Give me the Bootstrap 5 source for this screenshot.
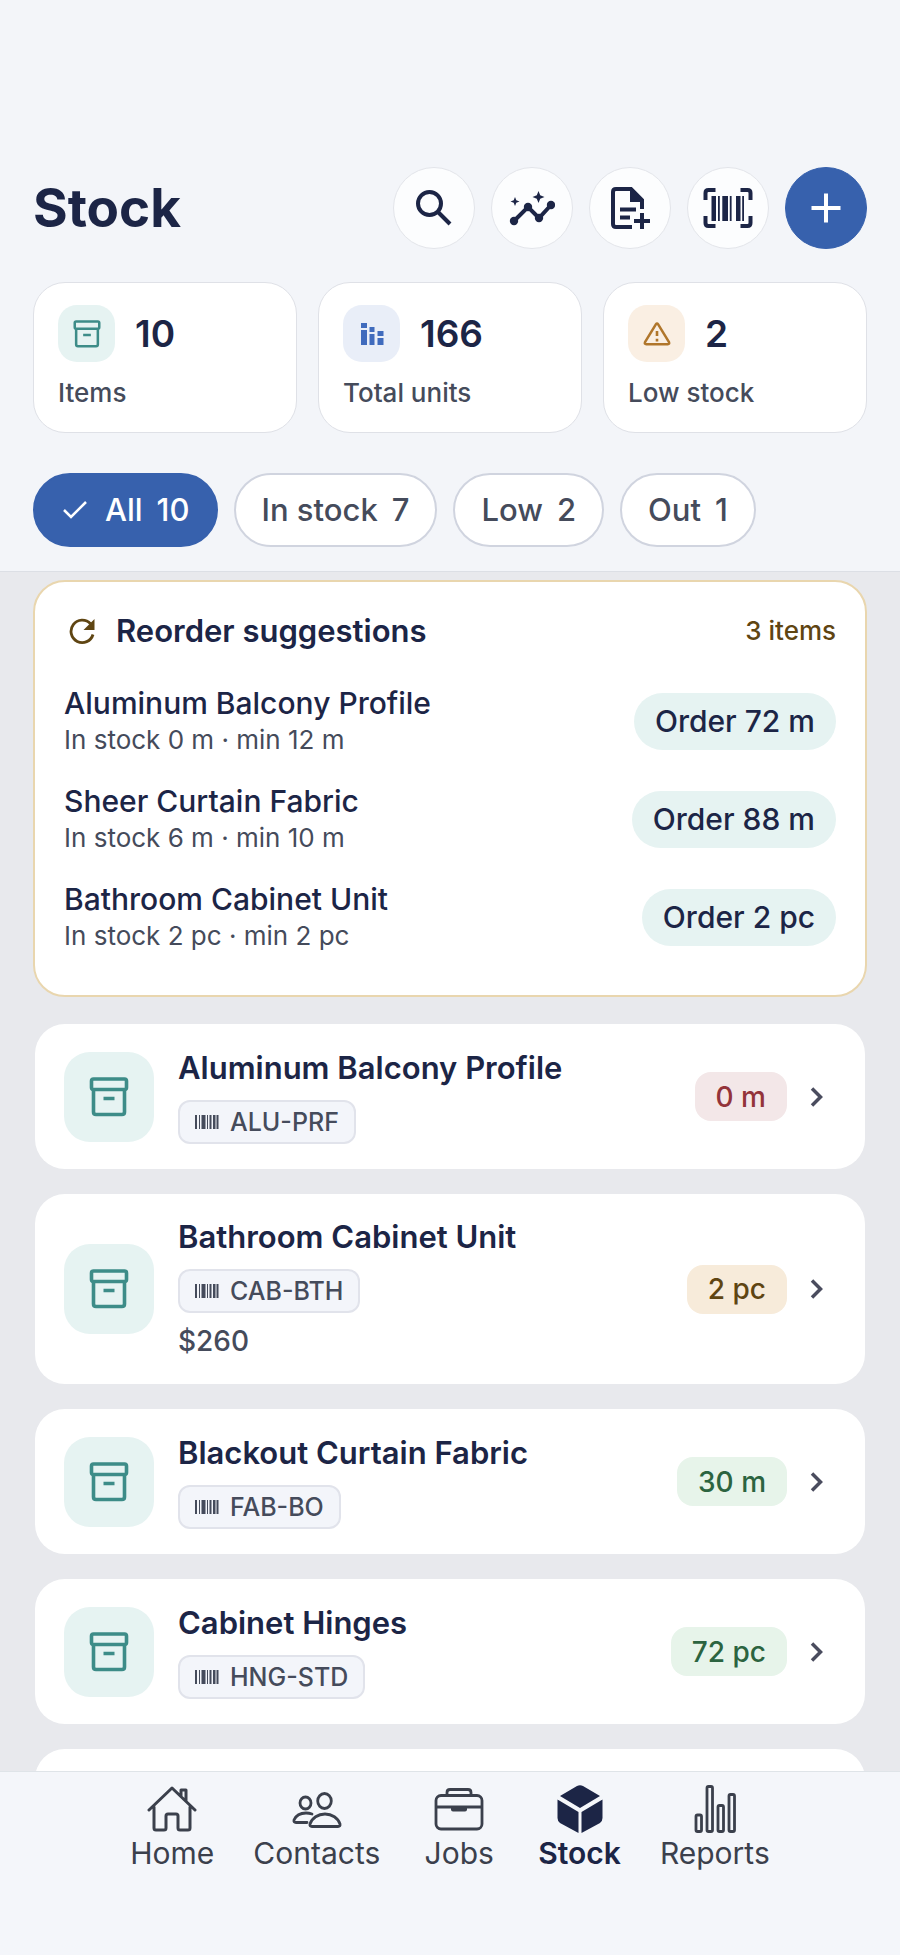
<!DOCTYPE html>
<html lang="en">
<head>
<meta charset="utf-8">
<meta name="viewport" content="width=device-width, initial-scale=1">
<title>Stock</title>
<link href="https://cdn.jsdelivr.net/npm/bootstrap@5.3.0/dist/css/bootstrap.min.css" rel="stylesheet">
<style>
:root{--ink:#1c2546;--muted:#454b5b;--brand:#3761ad;--teal:#3d8c88;--teal-bg:#e6f3f2;--panel:#f3f5f9}
body{font-family:Inter,"Liberation Sans",sans-serif;font-size:28px;line-height:36px;color:var(--ink);background:#e8e9ed}
svg{display:block;flex:none}
.app-head{background:var(--panel);border-bottom:1px solid #dcdfe5;padding:167px 33px 24px}
.page-title{font-size:53px;line-height:64px;font-weight:700}
.round-btn{width:82px;height:82px;border-radius:50%;border:1px solid #e3e5ea;background:#fcfdfe;color:var(--ink);padding:0}
.round-btn.primary{background:var(--brand);border-color:var(--brand);color:#fff}
.head-gap{gap:16px}
.stats{gap:21px;margin-top:33px}
.stat{flex:1 1 0;background:#fff;border:1px solid #dfe1e7;border-radius:32px;padding:22px 24px 23px}
.stat-top{gap:20px}
.tile{width:57px;height:57px;border-radius:19px;background:var(--teal-bg);color:var(--teal)}
.tile.blue{background:#e9eef8;color:#406bbd}
.tile.amber{background:#faefe3;color:#b0762b}
.stat-num{font-size:37px;line-height:44px;font-weight:600}
.stat-label{font-size:26px;line-height:32px;font-weight:500;color:var(--muted);margin-top:15px}
.chips{gap:16px;margin-top:40px}
.chip{height:74px;border-radius:37px;border:2px solid #d0d4df;background:#fff;color:var(--muted);font-size:31px;font-weight:500;padding:0 26px;gap:14px}
.chip.on{background:var(--brand);border-color:var(--brand);color:#fff;padding-left:28px}
.feed{min-height:0;overflow-y:auto;scrollbar-width:none;padding:8px 33px 0}
.feed::-webkit-scrollbar{display:none}
.reorder{background:#fff;border:2px solid #e9d6ae;border-radius:32px;padding:31px 29px 41px}
.reorder h2,.item-name{font-size:31px;line-height:36px;font-weight:600;color:var(--ink)}
.reorder-head{color:#5f4512;margin-bottom:35px;gap:20px}
.small-text{font-size:26px;line-height:36px}
.text-sub{color:var(--muted)}
.row-line{height:74px;margin-bottom:24px}
.row-line:last-child{margin-bottom:0}
.row-name{font-size:30px;line-height:38px;font-weight:500}
.order-btn{height:57px;border:0;border-radius:29px;background:var(--teal-bg);color:var(--ink);font-weight:500;font-size:30px;padding:0 21px}
.items{padding:27px 2px 0;gap:25px}
.item{background:#fff;border-radius:30px;padding:25px 41px 25px 29px;min-height:145px;color:inherit;text-decoration:none}
.item .tile{width:90px;height:90px;border-radius:26px;margin-right:24px}
.sku{height:44px;border:2px solid #e1e3eb;border-radius:12px;background:#f3f5fa;color:var(--muted);font-size:25px;font-weight:500;padding:0 15px;gap:11px;margin-top:14px}
.price{color:var(--muted);font-weight:500;line-height:36px;margin-top:10px}
.qty{height:49px;border-radius:16px;padding:0 21px;font-weight:500;font-size:28px;margin-right:23px}
.q-out{background:#f3e7e8;color:#93333a}
.q-low{background:#f7ebda;color:#5f4512}
.q-ok{background:#e7f4ea;color:#2c6440}
.chev{color:#4a4c5e}
.tabs{background:#f4f6fa;border-top:1px solid #dfe4e8;height:184px;padding-top:13px;gap:39px}
.tab-link{color:#3b404c;text-decoration:none;min-width:80px;font-size:30px}
.tab-link.on{color:var(--ink);font-weight:600}
.tab-link svg{margin-bottom:2px}
</style>
</head>
<body class="d-flex flex-column vh-100 overflow-hidden">
<svg width="0" height="0" class="position-absolute" aria-hidden="true">
<symbol id="box" viewBox="0 0 40 40"><g fill="none" stroke="currentColor" stroke-width="3.600"><rect x="2.500" y="2" width="35" height="10.500" rx="2"/><path d="M4.500 12.500V35q0 2.500 2.500 2.500h26q2.500 0 2.500-2.500V12.500M14.500 21.500h11"/></g></symbol>
<symbol id="bars" viewBox="0 0 24 14"><path fill="currentColor" d="M0 0h2v14H0zM4 0h1v14H4zM6.500 0h4v14h-4zM12 0h1v14h-1zM14.500 0h2v14h-2zM18 0h2.500v14H18zM21.500 0h2v14h-2z"/></symbol>
<symbol id="chev" viewBox="0 0 14 20"><path fill="none" stroke="currentColor" stroke-width="3.500" d="m2 1.500 8.500 8.500L2 18.500"/></symbol>
</svg>

<header class="app-head flex-shrink-0">
<div class="d-flex align-items-center justify-content-between">
<h1 class="page-title m-0">Stock</h1>
<div class="d-flex head-gap">
<button class="round-btn d-flex align-items-center justify-content-center" aria-label="Search"><svg width="36" height="36" viewBox="0 0 36 36" fill="none" stroke="currentColor" stroke-width="4"><circle cx="13.500" cy="13.500" r="11.500"/><path d="m22 22 12 12"/></svg></button>
<button class="round-btn d-flex align-items-center justify-content-center" aria-label="Insights"><svg width="46" height="36" viewBox="0 0 46 36" fill="currentColor"><path d="M5 31 19 17l11 11 12-13" fill="none" stroke="currentColor" stroke-width="4"/><circle cx="5" cy="31" r="4.200"/><circle cx="19" cy="17" r="4.200"/><circle cx="30" cy="28" r="4.200"/><circle cx="42" cy="15" r="4.200"/><path d="m29.500 1 1.700 4.300L35.500 7l-4.300 1.700-1.700 4.300-1.700-4.300L23.500 7l4.300-1.700zM6 7l1.300 3.200 3.200 1.300-3.200 1.300L6 16l-1.300-3.200-3.200-1.300 3.200-1.300z"/></svg></button>
<button class="round-btn d-flex align-items-center justify-content-center" aria-label="Add document"><svg width="44" height="44" viewBox="0 0 44 44" fill="none" stroke="currentColor" stroke-width="4"><path d="M24 41H8q-3 0-3-3V6q0-3 3-3h15l11 11v9M12 23.500h16M12 31.500h10M34 27v16M26 35h16"/><path d="M22 2v14h14z" fill="currentColor" stroke="none"/></svg></button>
<button class="round-btn d-flex align-items-center justify-content-center" aria-label="Scan barcode"><svg width="50" height="42" viewBox="0 0 50 42"><path fill="none" stroke="currentColor" stroke-width="4" d="M2.500 13V6q0-3 3-3h7M37.500 3h7q3 0 3 3v7M47.500 29v7q0 3-3 3h-7M12.500 39h-7q-3 0-3-3v-7"/><path fill="currentColor" d="M8.500 9h4.500v25H8.500zM15 9h1.800v25H15zM19.300 9h5.700v25h-5.700zM26.800 9h1.800v25h-1.800zM33 9h4.500v25H33zM39.200 9H41v25h-1.800z"/></svg></button>
<button class="round-btn primary d-flex align-items-center justify-content-center" aria-label="Add item"><svg width="30" height="30" viewBox="0 0 30 30"><path stroke="currentColor" stroke-width="4" d="M15 .5v29M.5 15h29"/></svg></button>
</div>
</div>
<div class="d-flex stats">
<div class="stat"><div class="d-flex align-items-center stat-top"><span class="tile d-flex align-items-center justify-content-center"><svg width="28" height="28"><use href="#box"/></svg></span><span class="stat-num">10</span></div><div class="stat-label">Items</div></div>
<div class="stat"><div class="d-flex align-items-center stat-top"><span class="tile blue d-flex align-items-center justify-content-center"><svg width="24" height="24" viewBox="0 0 24 24" fill="currentColor"><path d="M1 1h6v5H1zM1 8h6v15H1zM9.500 5h5v5h-5zM9.500 12h5v11h-5zM17.500 9h6v5h-6zM17.500 16h6v7h-6z"/></svg></span><span class="stat-num">166</span></div><div class="stat-label">Total units</div></div>
<div class="stat"><div class="d-flex align-items-center stat-top"><span class="tile amber d-flex align-items-center justify-content-center"><svg width="28" height="26" viewBox="0 0 28 26" fill="none" stroke="currentColor"><path stroke-width="2.500" stroke-linejoin="round" d="M13 3.200q1-1.500 2 0l11 18q.8 2-1.200 2H3.200q-2 0-1.200-2z"/><path stroke-width="2.600" d="M14 10v5M14 17.800v2.700"/></svg></span><span class="stat-num">2</span></div><div class="stat-label">Low stock</div></div>
</div>
<div class="d-flex chips">
<button class="chip on d-flex align-items-center"><svg width="24" height="20" viewBox="0 0 24 20" fill="none" stroke="currentColor" stroke-width="2.500"><path d="m1 10 7 7L23 2"/></svg><span class="ms-1">All</span><span>10</span></button>
<button class="chip d-flex align-items-center"><span>In stock</span><span>7</span></button>
<button class="chip d-flex align-items-center"><span>Low</span><span>2</span></button>
<button class="chip d-flex align-items-center"><span>Out</span><span>1</span></button>
</div>
</header>

<main class="feed flex-grow-1">
<section class="reorder">
<div class="reorder-head d-flex align-items-center">
<svg class="ms-1" width="28" height="28" viewBox="0 0 28 28"><path d="M25 17.500a11.200 11.200 0 1 1-2.500-10.700" fill="none" stroke="currentColor" stroke-width="2.800"/><path d="M26.500 2v11h-11z" fill="currentColor"/></svg>
<h2 class="m-0 flex-grow-1">Reorder suggestions</h2>
<span class="small-text fw-medium">3 items</span>
</div>
<div>
<div class="row-line d-flex align-items-center justify-content-between"><div><div class="row-name">Aluminum Balcony Profile</div><div class="small-text text-sub">In stock 0 m · min 12 m</div></div><button class="order-btn">Order 72 m</button></div>
<div class="row-line d-flex align-items-center justify-content-between"><div><div class="row-name">Sheer Curtain Fabric</div><div class="small-text text-sub">In stock 6 m · min 10 m</div></div><button class="order-btn">Order 88 m</button></div>
<div class="row-line d-flex align-items-center justify-content-between"><div><div class="row-name">Bathroom Cabinet Unit</div><div class="small-text text-sub">In stock 2 pc · min 2 pc</div></div><button class="order-btn">Order 2 pc</button></div>
</div>
</section>
<div class="items d-flex flex-column">
<a href="#" class="item d-flex align-items-center"><span class="tile d-flex align-items-center justify-content-center"><svg width="40" height="40"><use href="#box"/></svg></span><span class="flex-grow-1 d-flex flex-column align-items-start"><span class="item-name">Aluminum Balcony Profile</span><span class="sku d-flex align-items-center"><svg width="24" height="14"><use href="#bars"/></svg>ALU-PRF</span></span><span class="qty q-out d-flex align-items-center">0 m</span><svg class="chev" width="14" height="20"><use href="#chev"/></svg></a>
<a href="#" class="item d-flex align-items-center"><span class="tile d-flex align-items-center justify-content-center"><svg width="40" height="40"><use href="#box"/></svg></span><span class="flex-grow-1 d-flex flex-column align-items-start"><span class="item-name">Bathroom Cabinet Unit</span><span class="sku d-flex align-items-center"><svg width="24" height="14"><use href="#bars"/></svg>CAB-BTH</span><span class="price">$260</span></span><span class="qty q-low d-flex align-items-center">2 pc</span><svg class="chev" width="14" height="20"><use href="#chev"/></svg></a>
<a href="#" class="item d-flex align-items-center"><span class="tile d-flex align-items-center justify-content-center"><svg width="40" height="40"><use href="#box"/></svg></span><span class="flex-grow-1 d-flex flex-column align-items-start"><span class="item-name">Blackout Curtain Fabric</span><span class="sku d-flex align-items-center"><svg width="24" height="14"><use href="#bars"/></svg>FAB-BO</span></span><span class="qty q-ok d-flex align-items-center">30 m</span><svg class="chev" width="14" height="20"><use href="#chev"/></svg></a>
<a href="#" class="item d-flex align-items-center"><span class="tile d-flex align-items-center justify-content-center"><svg width="40" height="40"><use href="#box"/></svg></span><span class="flex-grow-1 d-flex flex-column align-items-start"><span class="item-name">Cabinet Hinges</span><span class="sku d-flex align-items-center"><svg width="24" height="14"><use href="#bars"/></svg>HNG-STD</span></span><span class="qty q-ok d-flex align-items-center">72 pc</span><svg class="chev" width="14" height="20"><use href="#chev"/></svg></a>
<div class="item"></div>
</div>
</main>

<nav class="tabs d-flex justify-content-center flex-shrink-0">
<a href="#" class="tab-link d-flex flex-column align-items-center"><svg width="50" height="48" viewBox="0 0 50 48" fill="none" stroke="currentColor" stroke-width="3" stroke-linejoin="round" stroke-linecap="round"><path d="M2 25 25 3l23 22M34 11V5h5v11M7 22v21q0 2 2 2h8q2 0 2-2V31q0-2 2-2h8q2 0 2 2v12q0 2 2 2h8q2 0 2-2V22"/></svg>Home</a>
<a href="#" class="tab-link d-flex flex-column align-items-center"><svg width="50" height="48" viewBox="0 0 50 48" fill="none" stroke="currentColor" stroke-width="2.800" stroke-linejoin="round" stroke-linecap="round"><ellipse cx="32.500" cy="16" rx="6.800" ry="7.500"/><ellipse cx="13.500" cy="18" rx="5.500" ry="6"/><path d="M20 41.500q-2.500 0-2-2.500c2-6 8-10 15-10s13 4 15 10q.5 2.500-2 2.500zM15 37.500H4q-2.500 0-2-2.500c2-4.500 6-7 12-7q3 0 6 1"/></svg>Contacts</a>
<a href="#" class="tab-link d-flex flex-column align-items-center"><svg width="50" height="48" viewBox="0 0 50 48" fill="none" stroke="currentColor" stroke-width="2.800"><rect x="2" y="10.500" width="46" height="33.500" rx="5"/><path d="M13 10V7.500q0-3 3-3h18q3 0 3 3V10M2 22h46"/><path d="M17 22h16v2.500q0 2-2 2H19q-2 0-2-2z" fill="currentColor" stroke="none"/></svg>Jobs</a>
<a href="#" class="tab-link on d-flex flex-column align-items-center" aria-current="page"><svg width="50" height="48" viewBox="0 0 50 48" fill="currentColor"><path d="M22 1q3-1.300 6 0l17 10-20 12L5 11zM2.500 14.500 23.500 27v21L5 38q-2.500-2-2.500-5zM47.500 14.500 26.500 27v21L45 38q2.500-2 2.500-5z"/></svg>Stock</a>
<a href="#" class="tab-link d-flex flex-column align-items-center"><svg width="50" height="48" viewBox="0 0 50 48" fill="none" stroke="currentColor" stroke-width="2.800"><rect x="6" y="30" width="5.500" height="16.500" rx="1.500"/><rect x="17" y="1.500" width="5.500" height="45" rx="1.500"/><rect x="28" y="20.500" width="5.500" height="26" rx="1.500"/><rect x="39" y="9.500" width="5.500" height="37" rx="1.500"/></svg>Reports</a>
</nav>
<script src="https://cdn.jsdelivr.net/npm/bootstrap@5.3.0/dist/js/bootstrap.bundle.min.js"></script>
</body>
</html>
